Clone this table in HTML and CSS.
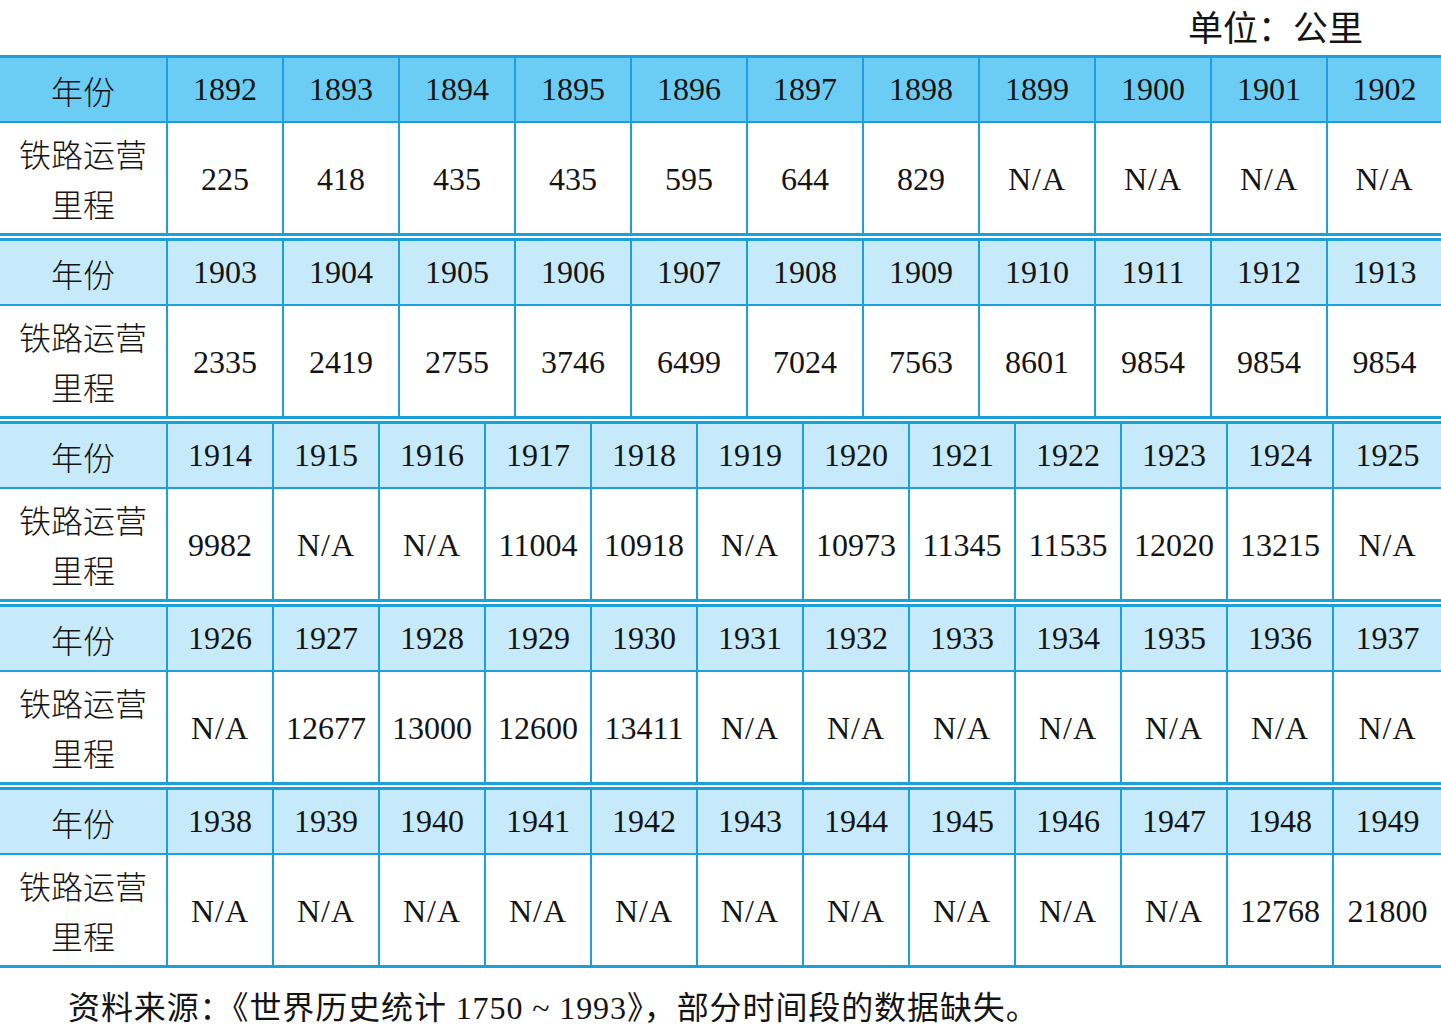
FILE: index.html
```html
<!DOCTYPE html>
<html lang="zh-CN">
<head>
<meta charset="utf-8">
<title>铁路运营里程</title>
<link rel="stylesheet" href="styles.css">
</head>
<body>
<div class="unit">单位：公里</div>

<div class="block cols11 first">
  <div class="cell head label">年份</div>
  <div class="cell head">1892</div><div class="cell head">1893</div><div class="cell head">1894</div><div class="cell head">1895</div><div class="cell head">1896</div><div class="cell head">1897</div><div class="cell head">1898</div><div class="cell head">1899</div><div class="cell head">1900</div><div class="cell head">1901</div><div class="cell head">1902</div>
  <div class="cell data label">铁路运营里程</div>
  <div class="cell data">225</div><div class="cell data">418</div><div class="cell data">435</div><div class="cell data">435</div><div class="cell data">595</div><div class="cell data">644</div><div class="cell data">829</div><div class="cell data na">N/A</div><div class="cell data na">N/A</div><div class="cell data na">N/A</div><div class="cell data na">N/A</div>
</div>

<div class="block cols11">
  <div class="cell head label">年份</div>
  <div class="cell head">1903</div><div class="cell head">1904</div><div class="cell head">1905</div><div class="cell head">1906</div><div class="cell head">1907</div><div class="cell head">1908</div><div class="cell head">1909</div><div class="cell head">1910</div><div class="cell head">1911</div><div class="cell head">1912</div><div class="cell head">1913</div>
  <div class="cell data label">铁路运营里程</div>
  <div class="cell data">2335</div><div class="cell data">2419</div><div class="cell data">2755</div><div class="cell data">3746</div><div class="cell data">6499</div><div class="cell data">7024</div><div class="cell data">7563</div><div class="cell data">8601</div><div class="cell data">9854</div><div class="cell data">9854</div><div class="cell data">9854</div>
</div>

<div class="block cols12">
  <div class="cell head label">年份</div>
  <div class="cell head">1914</div><div class="cell head">1915</div><div class="cell head">1916</div><div class="cell head">1917</div><div class="cell head">1918</div><div class="cell head">1919</div><div class="cell head">1920</div><div class="cell head">1921</div><div class="cell head">1922</div><div class="cell head">1923</div><div class="cell head">1924</div><div class="cell head">1925</div>
  <div class="cell data label">铁路运营里程</div>
  <div class="cell data">9982</div><div class="cell data na">N/A</div><div class="cell data na">N/A</div><div class="cell data">11004</div><div class="cell data">10918</div><div class="cell data na">N/A</div><div class="cell data">10973</div><div class="cell data">11345</div><div class="cell data">11535</div><div class="cell data">12020</div><div class="cell data">13215</div><div class="cell data na">N/A</div>
</div>

<div class="block cols12">
  <div class="cell head label">年份</div>
  <div class="cell head">1926</div><div class="cell head">1927</div><div class="cell head">1928</div><div class="cell head">1929</div><div class="cell head">1930</div><div class="cell head">1931</div><div class="cell head">1932</div><div class="cell head">1933</div><div class="cell head">1934</div><div class="cell head">1935</div><div class="cell head">1936</div><div class="cell head">1937</div>
  <div class="cell data label">铁路运营里程</div>
  <div class="cell data na">N/A</div><div class="cell data">12677</div><div class="cell data">13000</div><div class="cell data">12600</div><div class="cell data">13411</div><div class="cell data na">N/A</div><div class="cell data na">N/A</div><div class="cell data na">N/A</div><div class="cell data na">N/A</div><div class="cell data na">N/A</div><div class="cell data na">N/A</div><div class="cell data na">N/A</div>
</div>

<div class="block cols12 last">
  <div class="cell head label">年份</div>
  <div class="cell head">1938</div><div class="cell head">1939</div><div class="cell head">1940</div><div class="cell head">1941</div><div class="cell head">1942</div><div class="cell head">1943</div><div class="cell head">1944</div><div class="cell head">1945</div><div class="cell head">1946</div><div class="cell head">1947</div><div class="cell head">1948</div><div class="cell head">1949</div>
  <div class="cell data label">铁路运营里程</div>
  <div class="cell data na">N/A</div><div class="cell data na">N/A</div><div class="cell data na">N/A</div><div class="cell data na">N/A</div><div class="cell data na">N/A</div><div class="cell data na">N/A</div><div class="cell data na">N/A</div><div class="cell data na">N/A</div><div class="cell data na">N/A</div><div class="cell data na">N/A</div><div class="cell data">12768</div><div class="cell data">21800</div>
</div>

<div class="source">资料来源：《世界历史统计 1750 ~ 1993》，部分时间段的数据缺失。</div>
</body>
</html>
```

FILE: styles.css
```css
html, body {
  margin: 0;
  padding: 0;
  background: #ffffff;
}

body {
  width: 1441px;
  font-family: "Liberation Serif", "Noto Sans CJK SC", serif;
  color: #141414;
}

.unit {
  height: 55px;
  box-sizing: border-box;
  text-align: right;
  padding-right: 78px;
  font-family: "Noto Sans CJK SC", sans-serif;
  font-size: 35px;
  line-height: 51px;
}

.block {
  display: grid;
  grid-template-rows: 65px 110px;
  border-top: 3px solid #1ba0dc;
  border-bottom: 3px solid #1ba0dc;
  margin-bottom: 2px;
}

.cols11 {
  grid-template-columns: 166px repeat(10, 116px) 1fr;
}

.cols12 {
  grid-template-columns: 166px repeat(11, 106px) 1fr;
}

.cell {
  box-sizing: border-box;
  display: flex;
  align-items: center;
  justify-content: center;
  text-align: center;
  font-size: 32px;
  border-left: 2px solid #1ba0dc;
  white-space: nowrap;
}

.cell.data {
  padding-top: 3px;
}

.cell.label {
  border-left: none;
  font-family: "Noto Sans CJK SC", sans-serif;
  font-weight: 300;
  white-space: normal;
  padding: 0 16px;
  line-height: 50px;
}

.head {
  background: #c7eafa;
  border-bottom: 2px solid #1ba0dc;
}

.first .head {
  background: #6ccdf4;
}

.data {
  background: #ffffff;
}

.na {
  letter-spacing: 1px;
}

.last {
  margin-bottom: 0;
}

.source {
  margin-top: 20px;
  padding-left: 68px;
  font-family: "Liberation Serif", "Noto Sans CJK SC", serif;
  font-size: 32px;
  letter-spacing: 0.9px;
  line-height: 40px;
  white-space: nowrap;
}
```
